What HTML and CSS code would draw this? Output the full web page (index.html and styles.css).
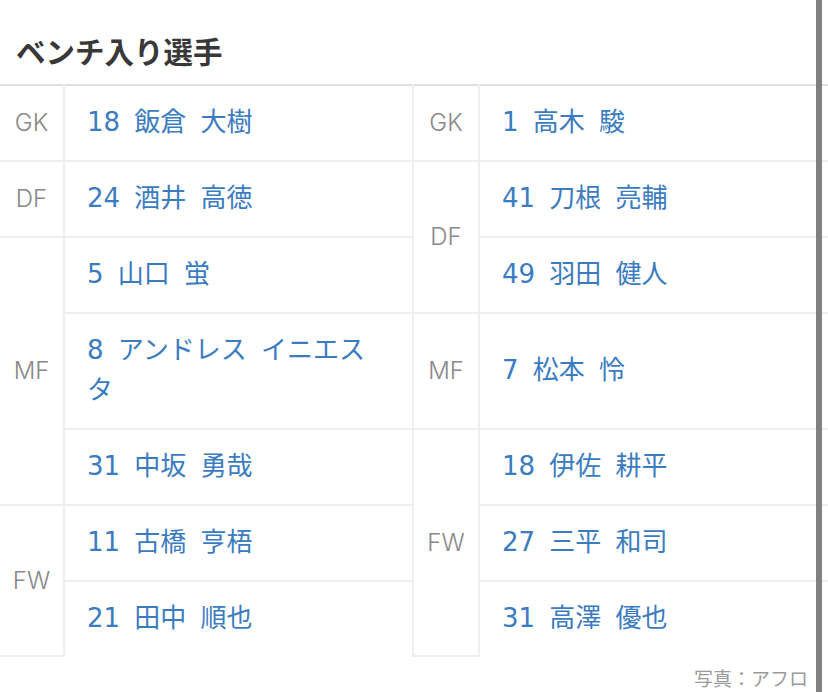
FILE: index.html
```html
<!DOCTYPE html>
<html lang="ja">
<head>
<meta charset="utf-8">
<link rel="stylesheet" href="styles.css">
</head>
<body>
<div class="page">
  <h2 class="title">ベンチ入り選手</h2>
  <table class="bench">
    <colgroup>
      <col class="c-pos"><col class="c-name"><col class="c-pos2"><col class="c-name">
    </colgroup>
    <tr>
      <td class="pos">GK</td><td class="name">18 飯倉 大樹</td>
      <td class="pos">GK</td><td class="name">1 高木 駿</td>
    </tr>
    <tr>
      <td class="pos">DF</td><td class="name">24 酒井 高徳</td>
      <td class="pos" rowspan="2">DF</td><td class="name">41 刀根 亮輔</td>
    </tr>
    <tr>
      <td class="pos" rowspan="3">MF</td><td class="name">5 山口 蛍</td>
      <td class="name">49 羽田 健人</td>
    </tr>
    <tr>
      <td class="name">8 アンドレス イニエスタ</td>
      <td class="pos">MF</td><td class="name">7 松本 怜</td>
    </tr>
    <tr>
      <td class="name">31 中坂 勇哉</td>
      <td class="pos" rowspan="3">FW</td><td class="name">18 伊佐 耕平</td>
    </tr>
    <tr>
      <td class="pos" rowspan="2">FW</td><td class="name">11 古橋 亨梧</td>
      <td class="name">27 三平 和司</td>
    </tr>
    <tr>
      <td class="name">21 田中 順也</td>
      <td class="name">31 高澤 優也</td>
    </tr>
  </table>
  <p class="credit">写真：アフロ</p>
  <div class="scroll-indicator"></div>
</div>
</body>
</html>
```
FILE: styles.css
```css
html, body {
  margin: 0;
  padding: 0;
  background: #fff;
}
body {
  width: 828px;
  height: 692px;
  overflow: hidden;
  font-family: "Noto Sans CJK JP", "Noto Sans", sans-serif;
}
.page {
  position: relative;
  width: 828px;
  height: 692px;
}
.title {
  margin: 0;
  padding: 29px 16px 13px;
  font-size: 29.5px;
  line-height: 42px;
  font-weight: 700;
  color: #383838;
}
.bench {
  width: 828px;
  border-collapse: collapse;
  table-layout: fixed;
  border-top: 2px solid #e0e0e0;
}
.c-pos { width: 64px; }
.c-pos2 { width: 66px; }
.bench td {
  border: 2px solid #eeeeee;
  padding: 17px 0;
  line-height: 40px;
  vertical-align: middle;
  font-family: Inter, "Noto Sans CJK JP", sans-serif;
}
.bench tr:first-child td { border-top: 2px solid #e0e0e0; }
.bench tr:last-child td { border-bottom: none; }
.bench td:first-child { border-left: none; }
.bench td:last-child { border-right: none; }
.pos {
  text-align: center;
  font-size: 24px;
  font-weight: 300;
  color: #888888;
}
.bench td.name {
  padding: 16px 32px 18px 22px;
  font-family: "DejaVu Sans", "Noto Sans CJK JP", sans-serif;
  font-size: 26px;
  font-weight: 400;
  color: #3b7bbf;
  word-spacing: 6px;
}
.credit {
  margin: 7px 20px 0 0;
  text-align: right;
  font-size: 19px;
  line-height: 28px;
  color: #9a9a9a;
}
.scroll-indicator {
  position: absolute;
  left: 816px;
  top: 0;
  width: 6px;
  height: 692px;
  background: #808080;
}
```
